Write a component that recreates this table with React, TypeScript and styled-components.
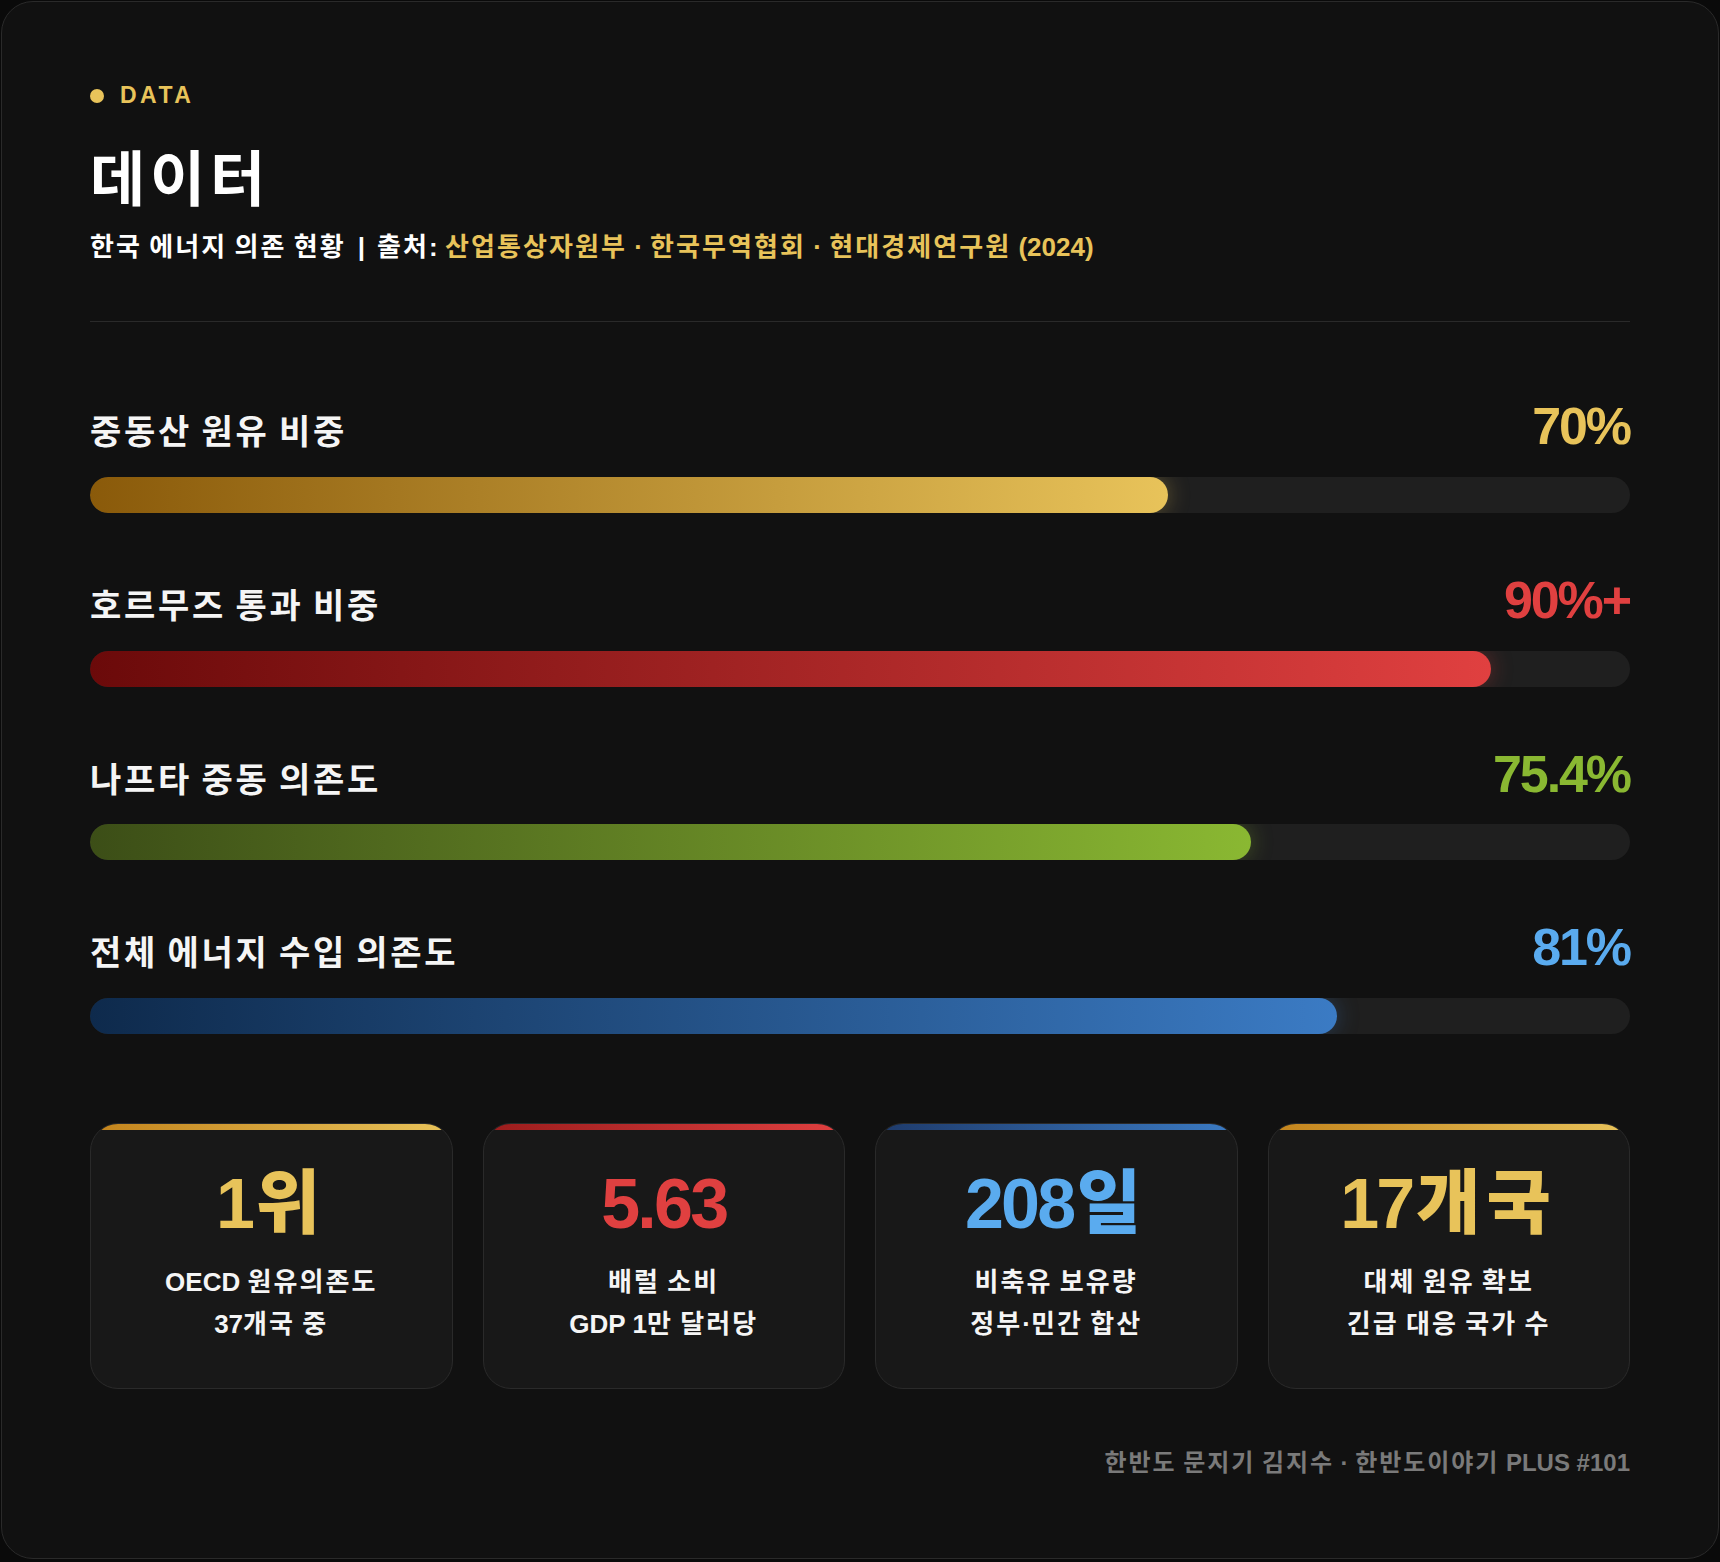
import React from "react";
import styled, { createGlobalStyle } from "styled-components";

const Global = createGlobalStyle`
  * { box-sizing: border-box; }
  html, body { margin: 0; padding: 0; background: #0a0a0a; }
  body {
    font-family: "Liberation Sans", "Noto Sans CJK KR", sans-serif;
    color: #f5f5f5;
  }
`;

const HangulRun = styled.span<{ $ls?: string; $lead?: string }>`
  letter-spacing: ${(p) => p.$ls ?? "0.08em"};
  padding-left: ${(p) => p.$lead ?? "0"};
`;

const HANGUL = /([\uAC00-\uD7A3\u3131-\u318E]+)/;

function Ko({ text, ls, lead }: { text: string; ls?: string; lead?: string }) {
  const parts = text.split(HANGUL);
  return (
    <>
      {parts.map((p, i) =>
        i % 2 === 1 ? (
          <HangulRun key={i} $ls={ls} $lead={lead}>
            {p}
          </HangulRun>
        ) : (
          <React.Fragment key={i}>{p}</React.Fragment>
        )
      )}
    </>
  );
}

const Frame = styled.div`
  margin: 1px;
  background: #111111;
  border: 1px solid #2a2a2a;
  border-radius: 32px;
  padding: 82px 88px 77px;
`;

const Header = styled.header`
  padding-bottom: 54px;
  border-bottom: 1px solid #2a2a2a;
`;

const Eyebrow = styled.div`
  display: flex;
  align-items: center;
  gap: 16px;
  height: 23px;
  font-size: 23px;
  line-height: 23px;
  font-weight: 700;
  letter-spacing: 0.15em;
  color: #e8c35a;
`;

const Dot = styled.span`
  width: 14px;
  height: 14px;
  border-radius: 50%;
  background: #e8c35a;
  flex: none;
`;

const Title = styled.h1`
  margin: 39px 0 0;
  font-size: 60px;
  line-height: 70px;
  font-weight: 700;
  color: #ffffff;
`;

const Subtitle = styled.p`
  margin: 12px 0 0;
  font-size: 26px;
  line-height: 39px;
  font-weight: 700;
  color: #ffffff;
`;

const Sep = styled.span`
  margin: 0 12px;
`;

const Source = styled.span`
  color: #e8c35a;
`;

const Bars = styled.section`
  margin-top: 78px;
  display: flex;
  flex-direction: column;
  gap: 61px;
`;

const Row = styled.div`
  display: flex;
  flex-direction: column;
`;

const RowHead = styled.div`
  display: flex;
  justify-content: space-between;
  align-items: baseline;
  margin-bottom: 24px;
`;

const Label = styled.span`
  font-size: 34px;
  line-height: 1.2;
  font-weight: 700;
  color: #f5f5f5;
`;

const Value = styled.span<{ $color: string }>`
  font-size: 52px;
  line-height: 52px;
  font-weight: 800;
  letter-spacing: -0.04em;
  color: ${(p) => p.$color};
`;

const Track = styled.div`
  height: 36px;
  border-radius: 18px;
  background: #1f1f1f;
  overflow: hidden;
`;

const Fill = styled.div<{ $from: string; $to: string; $glow: string }>`
  height: 100%;
  border-radius: 18px;
  background: linear-gradient(90deg, ${(p) => p.$from}, ${(p) => p.$to});
  box-shadow: 0 0 22px ${(p) => p.$glow};
`;

const Cards = styled.section`
  margin-top: 89px;
  display: grid;
  grid-template-columns: repeat(4, 1fr);
  gap: 30px;
`;

const Card = styled.div`
  display: flex;
  flex-direction: column;
  background: #181818;
  border: 1px solid #2a2a2a;
  border-radius: 28px;
  overflow: hidden;
`;

const Strip = styled.div<{ $from: string; $to: string }>`
  height: 6px;
  flex: none;
  background: linear-gradient(90deg, ${(p) => p.$from}, ${(p) => p.$to});
`;

const CardBody = styled.div`
  padding: 36px 16px 43px;
  text-align: center;
`;

const Num = styled.div<{ $color: string }>`
  font-size: 70px;
  line-height: 77px;
  font-weight: 800;
  letter-spacing: -0.04em;
  color: ${(p) => p.$color};
`;

const Desc = styled.div`
  margin-top: 18px;
  font-size: 26px;
  line-height: 42px;
  font-weight: 700;
  color: #f5f5f5;
`;

const Footer = styled.footer`
  margin-top: 56px;
  text-align: right;
  font-size: 24px;
  line-height: 36px;
  font-weight: 700;
  color: #7a7a7a;
`;

const bars = [
  { label: "중동산 원유 비중", value: "70%", pct: 70, color: "#e8c35a", from: "#8a5a0a", to: "#e8c35a", glow: "rgba(232,195,90,0.35)" },
  { label: "호르무즈 통과 비중", value: "90%+", pct: 91, color: "#e04040", from: "#6b0a0a", to: "#e04040", glow: "rgba(224,64,64,0.35)" },
  { label: "나프타 중동 의존도", value: "75.4%", pct: 75.4, color: "#8ab832", from: "#3c4e17", to: "#8ab832", glow: "rgba(138,184,50,0.35)" },
  { label: "전체 에너지 수입 의존도", value: "81%", pct: 81, color: "#5aabef", from: "#0e2a4c", to: "#3b7bc4", glow: "rgba(59,123,196,0.35)" },
];

const cards = [
  { num: "1위", color: "#e8c35a", from: "#c4841c", to: "#e8c35a", lines: ["OECD 원유의존도", "37개국 중"] },
  { num: "5.63", color: "#e04040", from: "#9b1c1c", to: "#e04040", lines: ["배럴 소비", "GDP 1만 달러당"] },
  { num: "208일", color: "#5aabef", from: "#1e3a6a", to: "#3b7bc4", lines: ["비축유 보유량", "정부·민간 합산"] },
  { num: "17개국", color: "#e8c35a", from: "#c4841c", to: "#e8c35a", lines: ["대체 원유 확보", "긴급 대응 국가 수"] },
];

export default function App() {
  return (
    <>
      <Global />
      <Frame>
        <Header>
          <Eyebrow>
            <Dot />
            DATA
          </Eyebrow>
          <Title>
            <Ko text="데이터" />
          </Title>
          <Subtitle>
            <Ko text="한국 에너지 의존 현황" />
            <Sep>|</Sep>
            <Ko text="출처: " />
            <Source>
              <Ko text="산업통상자원부 · 한국무역협회 · 현대경제연구원 (2024)" />
            </Source>
          </Subtitle>
        </Header>

        <Bars>
          {bars.map((b) => (
            <Row key={b.label}>
              <RowHead>
                <Label>
                  <Ko text={b.label} />
                </Label>
                <Value $color={b.color}>{b.value}</Value>
              </RowHead>
              <Track>
                <Fill $from={b.from} $to={b.to} $glow={b.glow} style={{ width: `${b.pct}%` }} />
              </Track>
            </Row>
          ))}
        </Bars>

        <Cards>
          {cards.map((c) => (
            <Card key={c.num}>
              <Strip $from={c.from} $to={c.to} />
              <CardBody>
                <Num $color={c.color}>
                  <Ko text={c.num} ls="0.09em" lead="0.05em" />
                </Num>
                <Desc>
                  <Ko text={c.lines[0]} />
                  <br />
                  <Ko text={c.lines[1]} />
                </Desc>
              </CardBody>
            </Card>
          ))}
        </Cards>

        <Footer>
          <Ko text="한반도 문지기 김지수 · 한반도이야기 PLUS #101" />
        </Footer>
      </Frame>
    </>
  );
}
